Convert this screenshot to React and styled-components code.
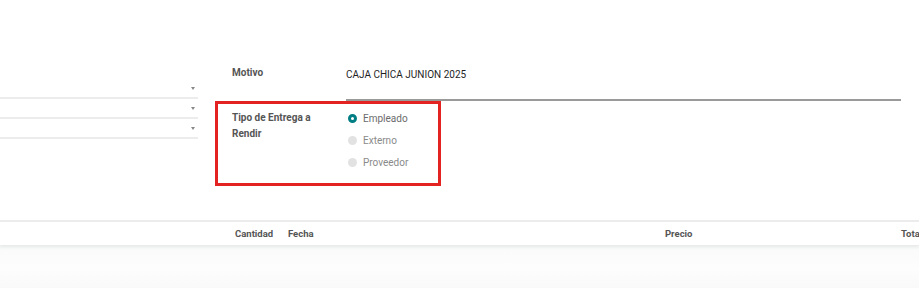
import React from 'react'
import styled, { createGlobalStyle } from 'styled-components'

const Global = createGlobalStyle`
  body {
    margin: 0;
    background: #fff;
    font-family: Roboto, "Liberation Sans", sans-serif;
    overflow: hidden;
  }
`

const Page = styled.div`
  width: 919px;
  height: 288px;
  overflow: hidden;
  display: flex;
  flex-direction: column;
`

const FormArea = styled.div`
  display: flex;
  padding-top: 65px;
  height: 158px;
  box-sizing: border-box;
`

const LeftCol = styled.div`
  width: 198px;
  padding-top: 14px;
  display: flex;
  flex-direction: column;
`

const SelectField = styled.div`
  height: 20px;
  border-bottom: 2px solid #ececec;
  display: flex;
  justify-content: flex-end;
  align-items: center;
  padding-right: 3px;
  box-sizing: border-box;
  &::after {
    content: "";
    border-left: 2.5px solid transparent;
    border-right: 2.5px solid transparent;
    border-top: 3px solid #888;
  }
`

const RightCol = styled.div`
  flex: 1;
  padding-left: 34px;
  padding-right: 18px;
  display: flex;
  flex-direction: column;
`

const Row = styled.div`
  position: relative;
  display: flex;
  align-items: flex-start;
  margin-top: ${p => p.$gap || 0}px;
`

const Label = styled.div`
  width: 115px;
  flex-shrink: 0;
  font-size: 10px;
  font-weight: 700;
  color: #555;
  line-height: 16px;
`

const Value = styled.div`
  flex: 1;
  font-size: 10px;
  color: #1f1f1f;
  line-height: 16px;
  padding-top: 2px;
  padding-bottom: 16px;
  border-bottom: 2px solid #9a9a9a;
  margin-left: -1px;
`

const Highlight = styled.div`
  position: absolute;
  left: -17px;
  top: -9px;
  width: 226px;
  height: 85px;
  border: 3px solid #e32222;
  box-sizing: border-box;
  pointer-events: none;
`

const RadioList = styled.div`
  display: flex;
  flex-direction: column;
  gap: 6px;
`

const RadioItem = styled.div`
  display: flex;
  align-items: center;
  gap: 6px;
  height: 16px;
  font-size: 10px;
  color: ${p => (p.$checked ? '#6b6b6b' : '#8a8a8a')};
  margin-left: 1px;
`

const Dot = styled.span`
  width: 9px;
  height: 9px;
  border-radius: 50%;
  box-sizing: border-box;
  background: ${p => (p.$checked ? '#fff' : '#e2e2e2')};
  border: ${p => (p.$checked ? '3px solid #017e84' : 'none')};
`

const Table = styled.div`
  margin-top: 62px;
  flex: 1;
  display: flex;
  flex-direction: column;
`

const HeaderRow = styled.div`
  height: 23px;
  border-top: 2px solid #ececec;
  display: flex;
  align-items: center;
  font-size: 9.5px;
  font-weight: 700;
  color: #555;
  box-shadow: 0 2px 3px rgba(0, 0, 0, 0.05);
  position: relative;
`

const Col = styled.div`
  width: ${p => p.$w}px;
  flex-shrink: 0;
  white-space: nowrap;
`

const Body = styled.div`
  flex: 1;
  background: linear-gradient(#f3f5f5 0px, #fbfbfb 6px, #fdfdfd 24px, #f9f9f9 44px);
`

export default function App() {
  return (
    <>
      <Global />
      <Page>
        <FormArea>
          <LeftCol>
            <SelectField />
            <SelectField />
            <SelectField />
          </LeftCol>
          <RightCol>
            <Row>
              <Label>Motivo</Label>
              <Value>CAJA CHICA JUNION 2025</Value>
            </Row>
            <Row $gap={9}>
              <Highlight />
              <Label>Tipo de Entrega a<br />Rendir</Label>
              <RadioList>
                <RadioItem $checked><Dot $checked />Empleado</RadioItem>
                <RadioItem><Dot />Externo</RadioItem>
                <RadioItem><Dot />Proveedor</RadioItem>
              </RadioList>
            </Row>
          </RightCol>
        </FormArea>
        <Table>
          <HeaderRow>
            <Col $w={235} />
            <Col $w={53}>Cantidad</Col>
            <Col $w={377}>Fecha</Col>
            <Col $w={236}>Precio</Col>
            <Col $w={40}>Total</Col>
          </HeaderRow>
          <Body />
        </Table>
      </Page>
    </>
  )
}
